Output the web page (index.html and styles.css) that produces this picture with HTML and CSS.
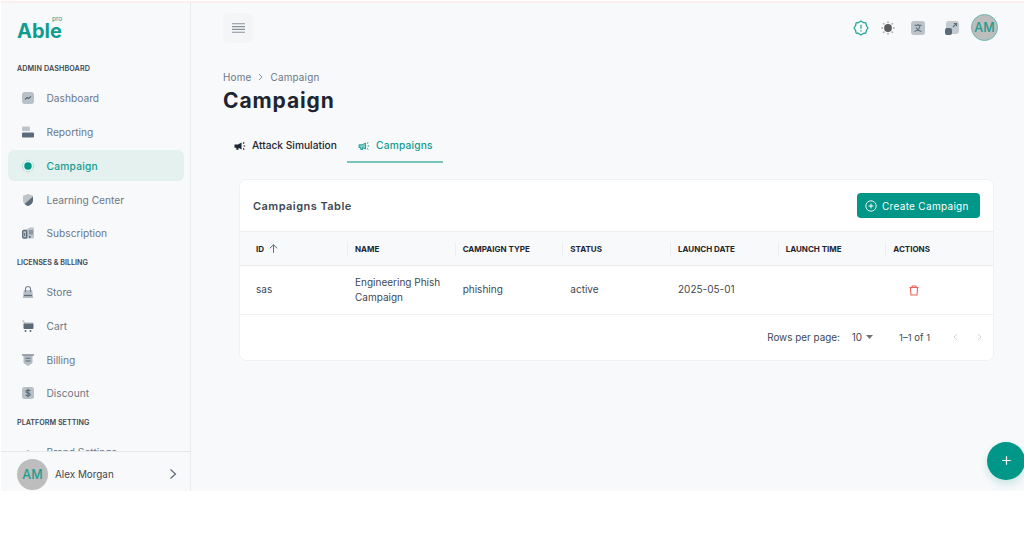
FILE: index.html
```html
<!DOCTYPE html>
<html lang="en">
<head>
    <meta charset="UTF-8">
    <meta name="viewport" content="width=device-width, initial-scale=1.0">
    <title>Campaign</title>
    <link rel="stylesheet" href="styles.css">
</head>
<body>
    <div class="app">
        <aside class="sidebar">
            <div class="logo">Able<span class="logo-tag">pro</span></div>
            <nav class="menu">
                <h2 class="menu-title">ADMIN DASHBOARD</h2>
                <a class="menu-item">
                    <svg class="icon" viewBox="0 0 14 14"><rect x="1" y="1" width="12" height="12" rx="3" fill="#b9c0c8"/><path d="M4 8.5l2-2 1.5 1L10 5.5" fill="none" stroke="#5b6b79" stroke-width="1.2"/></svg>
                    <span>Dashboard</span>
                </a>
                <a class="menu-item">
                    <svg class="icon" viewBox="0 0 14 14"><rect x="1" y="1.5" width="8" height="4.5" rx="1" fill="#bdc4ca"/><rect x="1" y="7.5" width="12" height="5" rx="1" fill="#5b6b79"/></svg>
                    <span>Reporting</span>
                </a>
                <a class="menu-item active">
                    <svg class="icon" viewBox="0 0 14 14"><path d="M3.500 2.500a5.700 5.700 0 0 0 0 9M10.500 2.500a5.700 5.700 0 0 1 0 9M5 1.400h4M5 12.600h4" fill="none" stroke="#b3dcd6" stroke-width=".9"/><circle cx="7" cy="7" r="3.700" fill="#009688"/></svg>
                    <span>Campaign</span>
                </a>
                <a class="menu-item">
                    <svg class="icon" viewBox="0 0 14 14"><path d="M7 1l5 1.800v4.400c0 2.800-2 4.700-5 5.800-3-1.100-5-3-5-5.800V2.800z" fill="#bdc4ca"/><path d="M12 3.500v3.700c0 2.800-2 4.700-5 5.800-1.300-.5-2.400-1.100-3.300-2z" fill="#5b6b79"/></svg>
                    <span>Learning Center</span>
                </a>
                <a class="menu-item">
                    <svg class="icon" viewBox="0 0 14 14"><path d="M4 4l5-2.500h3a1 1 0 0 1 1 1v9a1 1 0 0 1-1 1H4z" fill="#bdc4ca"/><rect x="1.700" y="4.500" width="4" height="7.500" rx="1" fill="#bdc4ca" stroke="#5b6b79" stroke-width="1.300"/><path d="M3.700 7v3M9 4v4.500M11 4v4.500" stroke="#5b6b79" stroke-width="1"/><path d="M8 10h1.500v2H8z" fill="#5b6b79"/></svg>
                    <span>Subscription</span>
                </a>
                <h2 class="menu-title">LICENSES &amp; BILLING</h2>
                <a class="menu-item">
                    <svg class="icon" viewBox="0 0 14 14"><path d="M2.800 5h8.400l1 8H1.800z" fill="#b5bdc4"/><path d="M4.500 7V4a2.500 2.500 0 0 1 5 0v3" fill="none" stroke="#77838e" stroke-width="1.100"/><path d="M3 10.500h8" stroke="#5b6b79" stroke-width="1.200"/></svg>
                    <span>Store</span>
                </a>
                <a class="menu-item">
                    <svg class="icon" viewBox="0 0 14 14"><path d="M1 2h1.500l1 2H12" fill="none" stroke="#b5bdc4" stroke-width="1.200"/><path d="M2.500 4.500h10v4.500a1 1 0 0 1-1 1h-8a1 1 0 0 1-1-1z" fill="#5b6b79"/><circle cx="4.500" cy="12" r="1" fill="#5b6b79"/><circle cx="9.500" cy="12" r="1" fill="#5b6b79"/></svg>
                    <span>Cart</span>
                </a>
                <a class="menu-item">
                    <svg class="icon" viewBox="0 0 14 14"><path d="M2.500 2.500h9v7.500L7 13l-4.500-3z" fill="#b5bdc4"/><path d="M1 2h12" stroke="#77838e" stroke-width="1.400"/><path d="M4.500 5.300h5M4.500 8h5" stroke="#5b6b79" stroke-width="1.100"/></svg>
                    <span>Billing</span>
                </a>
                <a class="menu-item">
                    <svg class="icon" viewBox="0 0 14 14"><rect x="1" y="1" width="12" height="12" rx="2.500" fill="#b9c0c8"/><path d="M9.200 5c-.4-1-4.200-1.300-4.200.4C5 7.200 9.200 6.500 9.200 8.600c0 1.800-4 1.500-4.400.2M7 2.800v8.400" fill="none" stroke="#5b6b79" stroke-width="1.200"/></svg>
                    <span>Discount</span>
                </a>
                <h2 class="menu-title">PLATFORM SETTING</h2>
                <a class="menu-item">
                    <svg class="icon" viewBox="0 0 14 14"><circle cx="7" cy="7.500" r="2" fill="#5b6b79"/></svg>
                    <span>Brand Settings</span>
                </a>
            </nav>
            <div class="user">
                <span class="avatar avatar-lg">AM</span>
                <span class="user-name">Alex Morgan</span>
                <svg class="chevron" viewBox="0 0 8 12"><path d="M1.500 1.500L6.500 6l-5 4.500" fill="none" stroke="#5b6b79" stroke-width="1.200"/></svg>
            </div>
        </aside>

        <main class="main">
            <header class="topbar">
                <button class="menu-toggle" aria-label="Toggle menu">
                    <svg width="13" height="10" viewBox="0 0 13 10"><path d="M0 .8h13M0 3.600h13M0 6.400h13M0 9.200h13" stroke="#8792a0" stroke-width="1.100"/></svg>
                </button>
                <div class="tools">
                    <svg class="tool-alert" viewBox="0 0 16 16"><path d="M8 1l2.200 1.500 2.700.4.500 2.800L15 8l-1.600 2.300-.5 2.700-2.700.5L8 15l-2.200-1.500-2.700-.5-.5-2.700L1 8l1.600-2.300.5-2.800 2.700-.4z" fill="none" stroke="#2aa89b" stroke-width="1.300" stroke-linejoin="round"/><path d="M8 4.800v4M8 10.200v1.300" stroke="#2aa89b" stroke-width="1.300"/></svg>
                    <svg class="tool-sun" viewBox="0 0 14 14"><circle cx="7" cy="7" r="3.900" fill="#5c5c5c"/><path d="M7 .5v1.500M7 12v1.500M.5 7H2M12 7h1.500M2.400 2.400l1 1M10.600 10.600l1 1M2.400 11.600l1-1M10.600 3.400l1-1" stroke="#777" stroke-width="1.100"/></svg>
                    <svg class="tool-lang" viewBox="0 0 14 14"><rect width="14" height="14" rx="3" fill="#bcc4cb"/><path d="M3.500 4.200h7M7 3v1.200M9 4.500C8.500 7.500 6.500 9.800 3.500 10.500M5 6.500c1.300 2.300 3 3.500 5.500 4" fill="none" stroke="#5b6b79" stroke-width="1.100"/></svg>
                    <svg class="tool-full" viewBox="0 0 14 14"><rect x="1" width="13" height="13" rx="3" fill="#c3cad0"/><rect y="7" width="7" height="7" rx="2" fill="#5b6b79"/><path d="M8 6l3.500-3.500M8.800 2.500h2.700v2.700" fill="none" stroke="#5b6b79" stroke-width="1.100"/></svg>
                    <span class="avatar avatar-top">AM</span>
                </div>
            </header>

            <div class="breadcrumb">
                <span>Home</span>
                <svg width="5" height="8" viewBox="0 0 5 8"><path d="M1 1l3 3-3 3" fill="none" stroke="#8a94a0"/></svg>
                <span>Campaign</span>
            </div>
            <h1>Campaign</h1>

            <div class="tabs">
                <a class="tab tab-attack">
                    <svg class="tab-icon" viewBox="0 0 12 10"><path d="M.5 3.500H4l3.500-2v7L4.500 6.800v2H2.300v-2H.5z" fill="#1d2630"/><path d="M9 2.500l1.300-1M9.500 5h1.700M9 7.500l1.300 1" stroke="#1d2630" stroke-width="1.100"/></svg>
                    <span>Attack Simulation</span>
                </a>
                <a class="tab tab-campaigns active">
                    <svg class="tab-icon" viewBox="0 0 12 10"><path d="M1 3.800h3.200l3.300-1.700v5.800L4.500 6.500v2H2.700v-2H1z" fill="#8ccfc8" stroke="#109c8e" stroke-width=".9"/><path d="M9 2.500l1.300-1M9.500 5h1.700M9 7.500l1.300 1" stroke="#109c8e"/></svg>
                    <span>Campaigns</span>
                </a>
            </div>

            <section class="card">
                <div class="card-header">
                    <h3>Campaigns Table</h3>
                    <button class="btn-create">
                        <svg width="12" height="12" viewBox="0 0 12 12"><path d="M6 3.600v4.800M3.600 6h4.800" stroke="#fff"/><circle cx="6" cy="6" r="5.200" fill="none" stroke="#fff" stroke-width=".9"/></svg>
                        <span>Create Campaign</span>
                    </button>
                </div>
                <table class="table">
                    <thead>
                        <tr>
                            <th class="col-id">ID <svg class="sort" width="9" height="9" viewBox="0 0 9 9"><path d="M4.500 8.800V.8M.8 4.300L4.500.8l3.700 3.500" fill="none" stroke="#5b6b79"/></svg></th>
                            <th>NAME</th>
                            <th>CAMPAIGN TYPE</th>
                            <th>STATUS</th>
                            <th>LAUNCH DATE</th>
                            <th>LAUNCH TIME</th>
                            <th>ACTIONS</th>
                        </tr>
                    </thead>
                    <tbody>
                        <tr>
                            <td class="col-id">sas</td>
                            <td>Engineering Phish Campaign</td>
                            <td>phishing</td>
                            <td>active</td>
                            <td>2025-05-01</td>
                            <td></td>
                            <td class="actions"><svg width="10" height="11" viewBox="0 0 10 11"><path d="M.5 2.500h9M3 2.300V1h4v1.300M1.500 2.500l.4 7.500h6.200l.4-7.500" fill="none" stroke="#f0605b" stroke-width="1.100" stroke-linejoin="round"/></svg></td>
                        </tr>
                    </tbody>
                </table>
                <div class="pagination">
                    <span class="rows-label">Rows per page:</span>
                    <span class="rows-count">10</span>
                    <svg class="caret" width="7" height="4" viewBox="0 0 7 4"><path d="M0 0h7L3.500 4z" fill="#6b7580"/></svg>
                    <span class="range">1–1 of 1</span>
                    <svg class="prev" width="5" height="8" viewBox="0 0 5 8"><path d="M4 1L1 4l3 3" fill="none" stroke="#d0d4d8"/></svg>
                    <svg class="next" width="5" height="8" viewBox="0 0 5 8"><path d="M1 1l3 3-3 3" fill="none" stroke="#d0d4d8"/></svg>
                </div>
            </section>

            <button class="fab" aria-label="Add">
                <svg width="9" height="9" viewBox="0 0 9 9"><path d="M4.500 .3v8.400M.3 4.500h8.400" stroke="#fff" stroke-width="1.200"/></svg>
            </button>
        </main>
    </div>
</body>
</html>
```

FILE: styles.css
```css
* {
    box-sizing: border-box;
}

body {
    margin: 0;
    background: #fff;
    font-family: Inter, "Open Sans", sans-serif;
    font-size: 10px;
    color: #3e4853;
}

h1, h2, h3 {
    margin: 0;
}

button {
    border: none;
    padding: 0;
    font-family: inherit;
    cursor: pointer;
}

svg {
    flex: none;
}

.app {
    display: flex;
    width: 1023px;
    height: 490px;
    margin: 1px 0 0 1px;
    background: #f8f9fb;
    border-top: 2px solid #fcf0ec;
    overflow: hidden;
}

/* Sidebar */
.sidebar {
    display: flex;
    flex-direction: column;
    width: 190px;
    flex: none;
    border-right: 1px solid #e9ecef;
}

.logo {
    position: relative;
    height: 58px;
    flex: none;
    padding: 20px 0 0 16px;
    font-size: 20px;
    line-height: 16px;
    font-weight: 700;
    color: #109c8e;
}

.logo-tag {
    position: absolute;
    left: 51px;
    top: 13px;
    font-size: 6.5px;
    line-height: 7px;
    font-weight: 400;
}

.menu {
    display: flex;
    flex-direction: column;
    flex: 1;
    min-height: 0;
    overflow: hidden;
}

.menu-title {
    height: 16px;
    flex: none;
    margin: 3.5px 0 5.3px 16px;
    font-size: 7.2px;
    line-height: 16px;
    font-weight: 600;
    color: #3e4853;
}

.menu-title:first-child {
    margin-top: .4px;
    letter-spacing: .1px;
}

.menu-item {
    display: flex;
    align-items: center;
    gap: 11.5px;
    height: 31px;
    flex: none;
    margin: 0 7px 2.8px;
    padding-left: 13px;
    border-radius: 6px;
    font-size: 10.2px;
    color: #6b7885;
}

.menu-item.active {
    margin-right: 6px;
    background: #e4f1ef;
    color: #109c8e;
    font-weight: 500;
    letter-spacing: .25px;
}

.icon {
    width: 14px;
    height: 14px;
}

.user {
    display: flex;
    align-items: center;
    height: 40px;
    flex: none;
    padding: 5px 13px 0 16px;
    border-top: 1px solid #e6e9ec;
}

.avatar {
    display: flex;
    align-items: center;
    justify-content: center;
    border-radius: 50%;
    background: #bdbdbd;
    color: #209c8f;
}

.avatar-lg {
    width: 31px;
    height: 31px;
    flex: none;
    font-size: 12.5px;
    font-weight: 500;
}

.user-name {
    margin-left: 7px;
    font-size: 9.9px;
}

.chevron {
    width: 8px;
    height: 12px;
    margin-left: auto;
}

/* Main area */
.main {
    position: relative;
    flex: 1;
    padding: 9px 30px 0 32px;
}

.topbar {
    display: flex;
    justify-content: space-between;
    align-items: center;
    height: 31px;
    margin-right: -4px;
}

.menu-toggle {
    display: flex;
    align-items: center;
    justify-content: center;
    width: 30px;
    height: 30px;
    border-radius: 5px;
    background: #f4f5f7;
}

.tools {
    display: flex;
    align-items: center;
}

.tool-alert {
    width: 16px;
    height: 16px;
    margin-right: 12px;
}

.tool-sun {
    width: 14px;
    height: 14px;
    margin-right: 16px;
}

.tool-lang {
    width: 14px;
    height: 14px;
    margin-right: 20px;
}

.tool-full {
    width: 14px;
    height: 14px;
    margin-right: 12px;
}

.avatar-top {
    width: 27px;
    height: 27px;
    border: 1px solid #68b9b0;
    font-size: 12.5px;
    font-weight: 500;
}

.breadcrumb {
    display: flex;
    align-items: center;
    gap: 7px;
    height: 14px;
    margin-top: 27px;
    font-size: 9.9px;
    letter-spacing: .2px;
    color: #6b7885;
}

h1 {
    margin-top: 3px;
    font-size: 21px;
    line-height: 28px;
    font-weight: 700;
    letter-spacing: .9px;
    color: #1d2630;
}

.tabs {
    display: flex;
    height: 34px;
    margin-top: 14px;
}

.tab {
    display: flex;
    align-items: center;
    gap: 6px;
    font-size: 10.2px;
    font-weight: 500;
    color: #1d2630;
}

.tab-attack {
    width: 124px;
    padding: 0 0 1px 11px;
}

.tab-campaigns {
    width: 96px;
    padding: 0 0 1px 11px;
    letter-spacing: .2px;
}

.tab span {
    margin-top: -2px;
}

.tab.active {
    color: #109c8e;
    box-shadow: inset 0 -2px #78c4bc;
}

.tab-icon {
    width: 12px;
    height: 10px;
}

/* Table card */
.card {
    width: 755px;
    height: 182px;
    margin: 16px 0 0 16px;
    border: 1px solid #eff2f4;
    border-radius: 7px;
    background: #fff;
}

.card-header {
    display: flex;
    align-items: center;
    justify-content: space-between;
    height: 51px;
    padding: 0 13px;
}

.card h3 {
    font-size: 11px;
    font-weight: 600;
    letter-spacing: .45px;
}

.btn-create {
    display: flex;
    align-items: center;
    gap: 5px;
    width: 123px;
    height: 25px;
    padding-left: 8px;
    border-radius: 4px;
    background: #009688;
    color: #fff;
    font-size: 10px;
    letter-spacing: .3px;
    white-space: nowrap;
}

.table {
    width: 753px;
    table-layout: fixed;
    border-collapse: separate;
    border-spacing: 0;
}

.table th {
    position: relative;
    height: 35px;
    padding: 0 0 0 8px;
    border-top: 1px solid #eceff2;
    border-bottom: 1px solid #e8ebee;
    background: #f8f9fb;
    text-align: left;
    font-size: 8px;
    font-weight: 700;
    color: #1d2630;
    white-space: nowrap;
}

/* Short divider between the headings */
.table th + th::before {
    content: "";
    position: absolute;
    left: 0;
    top: 10px;
    width: 1px;
    height: 14px;
    background: #eceff2;
}

.table .col-id {
    width: 107px;
    padding-left: 16px;
}

.sort {
    margin-left: 3px;
    vertical-align: -1px;
}

.table td {
    height: 49px;
    padding: 0 0 0 8px;
    border-bottom: 1px solid #eef0f2;
    font-size: 10px;
    line-height: 15.5px;
}

.table .actions {
    padding-left: 24px;
}

.actions svg {
    display: block;
}

.pagination {
    display: flex;
    align-items: center;
    justify-content: flex-end;
    height: 44px;
    padding-right: 11px;
    font-size: 9.9px;
}

.rows-count {
    margin-left: 12px;
}

.caret {
    margin-left: 4px;
}

.range {
    margin-left: 26px;
    font-size: 9.5px;
}

.prev {
    margin-left: 23px;
}

.next {
    margin-left: 19px;
}

.fab {
    position: absolute;
    right: -1px;
    top: 439px;
    display: flex;
    align-items: center;
    justify-content: center;
    width: 38px;
    height: 38px;
    padding-bottom: 2px;
    border-radius: 50%;
    background: #009688;
    box-shadow: 0 4px 8px rgba(0, 150, 136, 0.2);
}
```
